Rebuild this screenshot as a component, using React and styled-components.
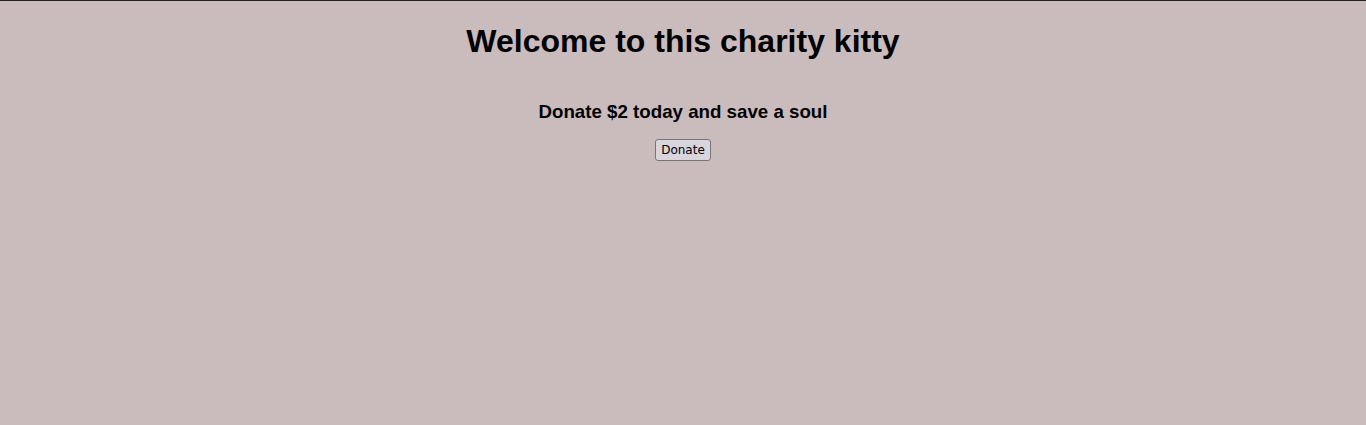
import React from "react";
import styled, { createGlobalStyle } from "styled-components";

const GlobalStyle = createGlobalStyle`
    html, body {
        margin: 0;
        padding: 0;
        background: #cabcbc;
    }
    body {
        font-family: "Liberation Sans", Arial, sans-serif;
        border-top: 1px solid #222222;
        min-height: 424px;
    }
`;

const Page = styled.main`
    display: flex;
    flex-direction: column;
    align-items: center;
    text-align: center;
`;

const Title = styled.h1`
    font-size: 32px;
    font-weight: bold;
    color: #000000;
    margin: 22px 0 0;
`;

const Subtitle = styled.h3`
    font-size: 18.72px;
    font-weight: bold;
    color: #000000;
    margin: 41px 0 0;
`;

const DonateButton = styled.button`
    margin-top: 16px;
    font-family: "DejaVu Sans", sans-serif;
    font-size: 12px;
    color: #000000;
    background: #d9d5dc;
    border: 1px solid #767676;
    border-radius: 3px;
    padding: 3px 5px;
    cursor: pointer;
`;

const App = () => {
    return (
        <>
            <GlobalStyle />
            <Page>
                <Title>Welcome to this charity kitty</Title>
                <Subtitle>Donate $2 today and save a soul</Subtitle>
                <DonateButton>Donate</DonateButton>
            </Page>
        </>
    );
};

export default App;
